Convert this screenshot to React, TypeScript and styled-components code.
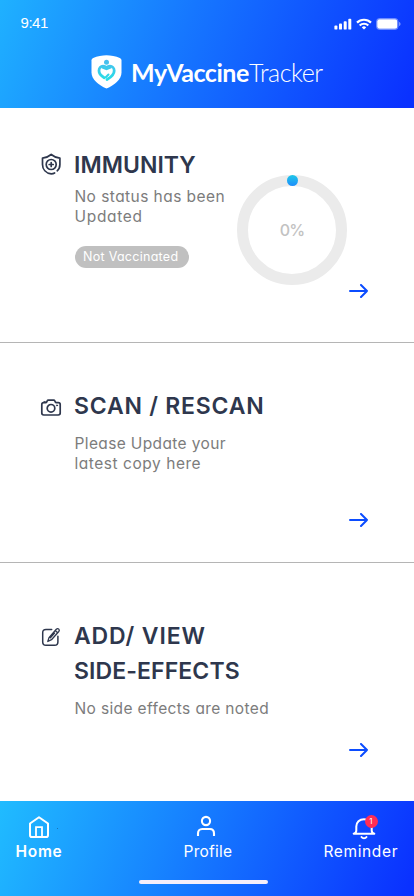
import React from 'react';
import styled, { createGlobalStyle } from 'styled-components';

const GlobalStyle = createGlobalStyle`
  * { box-sizing: border-box; }
  body {
    margin: 0;
    background: #fff;
    font-family: Inter, 'Noto Sans', sans-serif;
    font-feature-settings: 'cv11';
  }
`;

const Screen = styled.div`
  width: 414px;
  height: 896px;
  display: flex;
  flex-direction: column;
  overflow: hidden;
  background: #fff;
`;

const Header = styled.header`
  height: 108px;
  flex: none;
  display: flex;
  flex-direction: column;
  color: #fff;
  background: linear-gradient(112deg, #1fb1ff 0%, #1677ff 43%, #0a31ff 98%);
`;

const StatusBar = styled.div`
  height: 47px;
  display: flex;
  justify-content: space-between;
  align-items: center;
  padding: 1px 13px 0 20.5px;
`;

const Time = styled.span`
  margin-top: -3px;
  font: 400 15px 'Liberation Sans', sans-serif;
  letter-spacing: -0.45px;
`;

const Indicators = styled.div`
  display: flex;
  align-items: center;
  svg { display: block; }
  svg + svg { margin-left: 4px; }
`;

const Brand = styled.div`
  display: flex;
  align-items: center;
  height: 49px;
  padding-left: 91px;
  svg { flex: none; }
`;

const BrandName = styled.div`
  display: flex;
  margin-left: 9px;
  font: 700 25px/34px Lato, sans-serif;
  letter-spacing: -0.44px;
  white-space: nowrap;
`;

const BrandLight = styled.span`
  font-weight: 300;
  letter-spacing: -0.45px;
`;

const Card = styled.section<{ $height: number; $top: number; $line?: boolean }>`
  height: ${p => p.$height}px;
  flex: none;
  display: grid;
  grid-template-columns: 34px 163px 112px 20px;
  padding: ${p => p.$top}px 0 0 40px;
  border-bottom: ${p => (p.$line ? '1px solid #b5b5b5' : '0')};
`;

const IconCell = styled.div<{ $top: number }>`
  padding-top: ${p => p.$top}px;
  svg { display: block; }
`;

const Copy = styled.div<{ $wide?: boolean }>`
  grid-column: ${p => (p.$wide ? 'span 2' : 'span 1')};
  white-space: nowrap;
`;

const Title = styled.h2<{ $spacing: number }>`
  margin: 0;
  font-size: 23px;
  line-height: 35px;
  font-weight: 600;
  letter-spacing: ${p => p.$spacing}px;
  color: #2e374d;
`;

const TitleLine = styled.span<{ $spacing: number }>`
  display: block;
  letter-spacing: ${p => p.$spacing}px;
`;

const Note = styled.p<{ $top: number }>`
  margin: ${p => p.$top}px 0 0 0.5px;
  font-size: 15.5px;
  line-height: 20px;
  color: #7c7c7c;
`;

const NoteLine = styled.span<{ $spacing: number }>`
  display: block;
  letter-spacing: ${p => p.$spacing}px;
`;

const Pill = styled.div`
  width: 114px;
  height: 22px;
  margin: 19px 0 0 0.5px;
  padding-left: 8.5px;
  border-radius: 11px;
  background: #c0c0c0;
  color: #fff;
  font-size: 12.5px;
  line-height: 22px;
  letter-spacing: 0.28px;
`;

const Ring = styled.div`
  position: relative;
  width: 110px;
  height: 110px;
  margin-top: 27px;
  border: 11px solid #ebebeb;
  border-radius: 50%;
  display: flex;
  align-items: center;
  justify-content: center;
  font-size: 16px;
  font-weight: 500;
  letter-spacing: -0.8px;
  color: #c2c2c2;
`;

const RingDot = styled.span`
  position: absolute;
  top: -11px;
  left: 39px;
  width: 11px;
  height: 11px;
  border-radius: 50%;
  background: linear-gradient(#1fc8e8, #1d8dfb);
`;

const ArrowButton = styled.button<{ $bottom: number }>`
  align-self: end;
  margin: 0 0 ${p => p.$bottom}px;
  padding: 0;
  border: 0;
  background: none;
  svg { display: block; }
`;

const NavBar = styled.nav`
  height: 95px;
  flex: none;
  display: flex;
  flex-direction: column;
  align-items: center;
  color: #fff;
  background: linear-gradient(112deg, #20bcff 0%, #1785ff 40%, #0a31ff 98%);
`;

const NavItems = styled.div`
  width: 100%;
  height: 79px;
  display: grid;
  grid-template-columns: 168px 140px 1fr;
  padding: 14px 0 0 15.5px;
`;

const NavItem = styled.div<{ $active?: boolean; $spacing: number; $shift: number }>`
  font-size: 15.5px;
  line-height: 22px;
  font-weight: ${p => (p.$active ? 600 : 400)};
  letter-spacing: ${p => p.$spacing}px;
  svg {
    display: block;
    overflow: visible;
    margin: 0 0 2px ${p => p.$shift}px;
  }
`;

const BellWrap = styled.div`
  position: relative;
`;

const Badge = styled.span`
  position: absolute;
  top: -0.5px;
  left: 41px;
  width: 13px;
  height: 13px;
  border-radius: 50%;
  background: #ff2d55;
  font-size: 8px;
  font-weight: 400;
  line-height: 13px;
  letter-spacing: 0;
  text-align: center;
`;

const HomeIndicator = styled.div`
  width: 129px;
  height: 4px;
  margin-right: 7px;
  border-radius: 2px;
  background: #f5eefa;
`;

const Arrow = ({ bottom }: { bottom: number }) => (
  <ArrowButton $bottom={bottom} aria-label="Open">
    <svg width="20" height="14" viewBox="0 0 20 14" fill="none" stroke="#0b4cff" strokeWidth="2" strokeLinecap="round" strokeLinejoin="round">
      <path d="M1 7H18M12 1l6 6-6 6" />
    </svg>
  </ArrowButton>
);

const Signal = () => (
  <svg width="18" height="12" viewBox="0 0 18 12" fill="#fff">
    <rect x="0.4" y="7.6" width="3" height="4" rx="0.9" />
    <rect x="5" y="5.5" width="3" height="6.1" rx="0.9" />
    <rect x="9.7" y="3.2" width="3" height="8.4" rx="0.9" />
    <rect x="14.3" y="0.8" width="3" height="10.8" rx="0.9" />
  </svg>
);

const Wifi = () => (
  <svg width="16" height="12" viewBox="0 0 16 12" fill="none" stroke="#fff" strokeWidth="2.200">
    <path d="M1 4.600a10 10 0 0 1 14 0" />
    <path d="M3.700 7.500a6.200 6.200 0 0 1 8.600 0" />
    <path d="M8 11.600l-2.200-2.200a3.200 3.200 0 0 1 4.400 0z" fill="#fff" stroke="none" />
  </svg>
);

const Battery = () => (
  <svg width="25" height="12" viewBox="0 0 25 12">
    <rect x="0.5" y="0.5" width="21.5" height="11" rx="3" fill="none" stroke="#fff" strokeOpacity="0.4" />
    <rect x="1.2" y="1.2" width="20.1" height="9.6" rx="2.200" fill="#fff" />
    <path d="M23 4v4c1-.4 1.600-1.200 1.600-2s-.6-1.600-1.600-2z" fill="#fff" fillOpacity="0.45" />
  </svg>
);

const Logo = () => (
  <svg width="31" height="34" viewBox="0 0 31 34" fill="none">
    <defs>
      <linearGradient id="figure" x1="0" y1="5" x2="0" y2="27" gradientUnits="userSpaceOnUse">
        <stop stopColor="#4bbcef" />
        <stop offset="1" stopColor="#22e2e5" />
      </linearGradient>
    </defs>
    <path d="M15.500 0.300C19.500 0.300 25 1.400 28.800 3c1.100.5 1.700 1.200 1.700 2.500v11.700C30.500 24.500 23.500 30 15.500 33.600 7.500 30 .5 24.500.5 17.200V5.500C.5 4.200 1.100 3.500 2.200 3 6 1.400 11.500.3 15.500.3z" fill="#fff" />
    <circle cx="15.500" cy="7.200" r="2.500" fill="url(#figure)" />
    <path d="M13.200 22.700C10.200 21 8 18.800 8 15.800c0-2.900 1.800-4.700 4-4.700 1.500 0 2.600.6 3.500 1.500.9-.9 2-1.500 3.500-1.500 2.200 0 4.200 1.800 4.200 4.700 0 3.500-3.200 6.500-7.200 8.700" stroke="url(#figure)" strokeWidth="2.800" strokeLinecap="round" strokeLinejoin="round" />
    <path d="M10.800 12.300l4.700 1.800 4.700-1.800" stroke="url(#figure)" strokeWidth="2" />
    <path d="M14.800 22.300l2.700-2.800" stroke="url(#figure)" strokeWidth="2" strokeLinecap="round" />
  </svg>
);

const ShieldIcon = () => (
  <svg width="22" height="22" viewBox="0 0 22 22" fill="none" stroke="#2e374d" strokeWidth="1.700" strokeLinecap="round" strokeLinejoin="round">
    <path d="M17.200 17.800c1.700-1.500 2.700-3.600 2.700-6.300V5.200c-3.400-.3-6-1.500-8.700-3.700C8.500 3.700 5.900 4.900 2.500 5.200v6.300c0 4.900 3.400 8.700 8.700 9.400 1.200-.1 2.400-.4 3.400-1" />
    <circle cx="11.200" cy="11.500" r="5" />
    <path d="M11.200 9.500v4M9.200 11.500h4" strokeWidth="1.700" />
  </svg>
);

const CameraIcon = () => (
  <svg width="22" height="18" viewBox="0 0 22 18" fill="none" stroke="#2e374d" strokeWidth="1.700" strokeLinecap="round" strokeLinejoin="round">
    <path d="M3.700 3.600h2c.5 0 .8-.2 1-.6l.5-1.100c.2-.5.6-.8 1.200-.8h5.200c.6 0 1 .3 1.200.8l.5 1.100c.2.400.5.600 1 .600h2c1.200 0 1.900.7 1.900 1.900v8.600c0 1.200-.7 1.900-1.900 1.900H3.700c-1.200 0-1.900-.7-1.900-1.900V5.500c0-1.200.7-1.900 1.900-1.900z" />
    <circle cx="11" cy="9.300" r="3.800" />
    <circle cx="17" cy="6.400" r="0.600" fill="#2e374d" strokeWidth="0.800" />
    <path d="M4 2.700h1.300" strokeWidth="1" />
  </svg>
);

const EditIcon = () => (
  <svg width="22" height="20" viewBox="0 0 22 20" fill="none" stroke="#2e374d" strokeWidth="1.500" strokeLinecap="round" strokeLinejoin="round">
    <path d="M11.700 2.500H6C3.700 2.500 2.700 3.500 2.700 5.800v9.100c0 2.200 1 3.300 3.300 3.300h8.600c2.300 0 3.300-1.100 3.300-3.300V9.300" />
    <path d="M16.300 2.200c1-.9 2-.6 2.500-.1.600.6.700 1.500 0 2.400l-7.300 8.200-3.700 1.800 1.200-3.900zM15.200 3.500l2.400 2.200M10.400 10.800l4.200-4.700" strokeWidth="1.300" />
  </svg>
);

export default function App() {
  return (
    <Screen>
      <GlobalStyle />
      <Header>
        <StatusBar>
          <Time>9:41</Time>
          <Indicators>
            <Signal />
            <Wifi />
            <Battery />
          </Indicators>
        </StatusBar>
        <Brand>
          <Logo />
          <BrandName>MyVaccine<BrandLight>Tracker</BrandLight></BrandName>
        </Brand>
      </Header>

      <Card $height={235} $top={40} $line>
        <IconCell $top={5}><ShieldIcon /></IconCell>
        <Copy>
          <Title $spacing={0.04}>IMMUNITY</Title>
          <Note $top={4}>
            <NoteLine $spacing={0.44}>No status has been</NoteLine>
            <NoteLine $spacing={0.68}>Updated</NoteLine>
          </Note>
          <Pill>Not Vaccinated</Pill>
        </Copy>
        <Ring><RingDot />0%</Ring>
        <Arrow bottom={44} />
      </Card>

      <Card $height={220} $top={46} $line>
        <IconCell $top={10}><CameraIcon /></IconCell>
        <Copy $wide>
          <Title $spacing={0.78}>SCAN / RESCAN</Title>
          <Note $top={10}>
            <NoteLine $spacing={0.37}>Please Update your</NoteLine>
            <NoteLine $spacing={0.54}>latest copy here</NoteLine>
          </Note>
        </Copy>
        <Arrow bottom={35} />
      </Card>

      <Card $height={238} $top={56}>
        <IconCell $top={8}><EditIcon /></IconCell>
        <Copy $wide>
          <Title $spacing={0}>
            <TitleLine $spacing={0.86}>ADD/ VIEW</TitleLine>
            <TitleLine $spacing={0.1}>SIDE-EFFECTS</TitleLine>
          </Title>
          <Note $top={10}>
            <NoteLine $spacing={0.37}>No side effects are noted</NoteLine>
          </Note>
        </Copy>
        <Arrow bottom={44} />
      </Card>

      <NavBar>
        <NavItems>
          <NavItem $active $spacing={0.7} $shift={12.5}>
            <svg width="22" height="24" viewBox="0 0 22 24" fill="none" stroke="#fff" strokeWidth="2" strokeLinejoin="round">
              <path d="M2 8.500L11 2.200l9 6.300v11.700c0 1.200-.6 1.800-1.800 1.800H3.800C2.600 22 2 21.400 2 20.200z" />
              <path d="M8 22v-9.800h6V22" strokeWidth="1.800" strokeLinejoin="miter" />
              <circle cx="29.500" cy="13.500" r="0.500" fill="#17639e" stroke="none" />
            </svg>
            Home
          </NavItem>
          <NavItem $spacing={0.23} $shift={11.5}>
            <svg width="22" height="24" viewBox="0 0 22 24" fill="none" stroke="#fff" strokeWidth="2.100">
              <circle cx="11" cy="6" r="4.100" />
              <path d="M3 21v-2.500C3 15.900 4.600 14 7.200 14h7.600c2.600 0 4.200 1.900 4.200 4.500V21" />
            </svg>
            Profile
          </NavItem>
          <NavItem $spacing={0.62} $shift={27.5}>
            <BellWrap>
              <svg width="26" height="24" viewBox="0 0 26 24" fill="none" stroke="#fff" strokeWidth="2" strokeLinecap="round" strokeLinejoin="round">
                <path d="M13 4.200c-4.500 0-7.700 3-7.700 7.300v4c0 1.500-.8 2.700-2.600 3.300h20.600c-1.800-.6-2.600-1.800-2.600-3.300v-4c0-4.300-3.200-7.300-7.700-7.300z" />
                <path d="M10.500 22c.7 1 1.500 1.300 2.500 1.300s1.800-.3 2.500-1.300" />
              </svg>
              <Badge>1</Badge>
            </BellWrap>
            Reminder
          </NavItem>
        </NavItems>
        <HomeIndicator />
      </NavBar>
    </Screen>
  );
}
